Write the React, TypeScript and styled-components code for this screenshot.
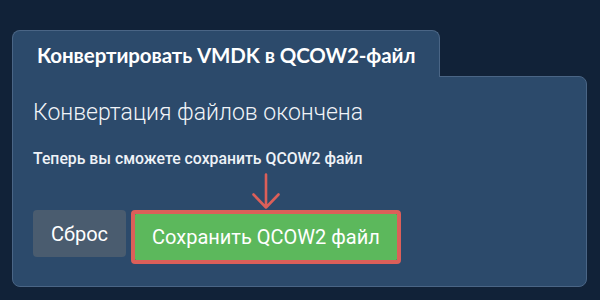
import React from "react";
import styled, { createGlobalStyle } from "styled-components";

const GlobalStyle = createGlobalStyle`
  html, body {
    margin: 0;
    padding: 0;
    background: #112238;
  }
  body {
    width: 600px;
    height: 300px;
    overflow: hidden;
    font-family: Roboto, "Liberation Sans", sans-serif;
  }
`;

const Page = styled.div`
  padding: 30px 0 0 12px;
  width: 575px;
`;

const Tab = styled.div`
  position: relative;
  z-index: 1;
  display: inline-block;
  box-sizing: border-box;
  height: 47px;
  margin-bottom: -1px;
  padding: 12px 23px 0 24px;
  background: #2c4a6b;
  border: 1px solid #4a6585;
  border-bottom: none;
  border-radius: 8px 8px 0 0;
`;

const TabTitle = styled.h1`
  margin: 0;
  font-family: Lato, "Liberation Sans", sans-serif;
  font-weight: 700;
  font-size: 20.5px;
  line-height: 24px;
  letter-spacing: -0.1px;
  color: #ffffff;
  white-space: nowrap;
`;

const Body = styled.div`
  background: #2c4a6b;
  border: 1px solid #4a6585;
  border-radius: 0 8px 8px 8px;
  padding: 22px 20px 22px 20px;
`;

const Heading = styled.h2`
  margin: 0;
  font-family: Roboto, "Liberation Sans", sans-serif;
  font-weight: 300;
  font-size: 23px;
  line-height: 28px;
  color: #f1f4f8;
`;

const Note = styled.p`
  margin: 22px 0 0 0;
  font-family: Roboto, "Liberation Sans", sans-serif;
  font-weight: 500;
  font-size: 15.8px;
  line-height: 20px;
  color: #eef2f7;
`;

const ButtonRow = styled.div`
  display: flex;
  align-items: flex-start;
  gap: 5px;
  margin-top: 41px;
`;

const BaseButton = styled.button`
  display: flex;
  align-items: center;
  justify-content: center;
  box-sizing: border-box;
  border: none;
  font-family: Roboto, "Liberation Sans", sans-serif;
  font-weight: 400;
  font-size: 20px;
  color: #ffffff;
  cursor: pointer;
  white-space: nowrap;
`;

const ResetButton = styled(BaseButton)`
  height: 47px;
  padding: 0 18px;
  background: #4a5c6f;
  border-radius: 4px;
`;

const Highlight = styled.div`
  position: relative;
  border: 4px solid #dc5f59;
  border-radius: 4px;
`;

const SaveButton = styled(BaseButton)`
  height: 46px;
  padding: 0 17px;
  background: #5cb85c;
  border-radius: 1px;
`;

const Arrow = styled.svg`
  position: absolute;
  left: 50%;
  bottom: 100%;
  margin-left: -15px;
  margin-bottom: 3px;
  width: 30px;
  height: 38px;
`;

export default function App() {
  return (
    <>
      <GlobalStyle />
      <Page>
        <Tab>
          <TabTitle>Конвертировать VMDK в QCOW2-файл</TabTitle>
        </Tab>
        <Body>
          <Heading>Конвертация файлов окончена</Heading>
          <Note>Теперь вы сможете сохранить QCOW2 файл</Note>
          <ButtonRow>
            <ResetButton>Сброс</ResetButton>
            <Highlight>
              <Arrow viewBox="0 0 30 38" fill="none">
                <path
                  d="M15 1.5 V34.5 M2.5 21.5 L15 34.5 L27.5 21.5"
                  stroke="#dc5f59"
                  strokeWidth="2.6"
                  strokeLinecap="round"
                  strokeLinejoin="round"
                />
              </Arrow>
              <SaveButton>Сохранить QCOW2 файл</SaveButton>
            </Highlight>
          </ButtonRow>
        </Body>
      </Page>
    </>
  );
}
